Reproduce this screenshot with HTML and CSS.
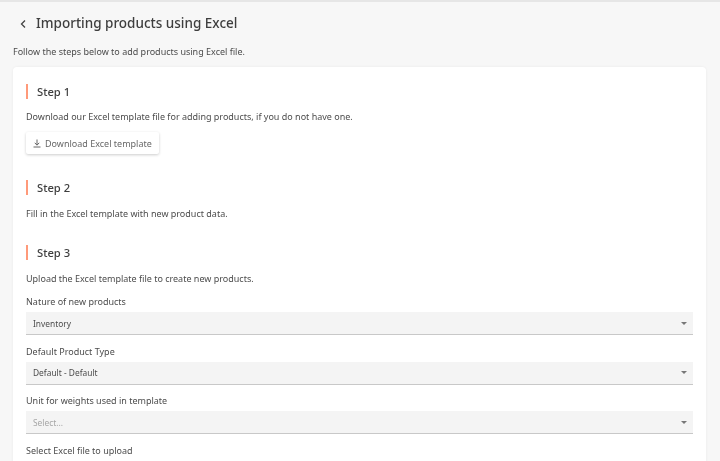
FILE: index.html
```html
<!DOCTYPE html>
<html lang="en">
<head>
<meta charset="utf-8">
<title>Importing products using Excel</title>
<link rel="stylesheet" href="styles.css">
</head>
<body>
<main class="page">
  <header class="page-head">
    <svg class="back" width="8" height="10" viewBox="0 0 8 10"><path d="M6 1.5 L2.5 5 L6 8.5" fill="none" stroke="#444" stroke-width="1.3"/></svg>
    <h1 class="title">Importing products using Excel</h1>
  </header>
  <p class="intro">Follow the steps below to add products using Excel file.</p>
  <section class="card">
    <div class="step">
      <h2 class="step-title">Step 1</h2>
      <p class="text">Download our Excel template file for adding products, if you do not have one.</p>
      <button class="btn" type="button">
        <svg width="8" height="9" viewBox="0 0 8 9"><path d="M4 0.5 V6 M1.8 3.8 L4 6.2 L6.2 3.8 M0.5 8 H7.5" fill="none" stroke="#666" stroke-width="1"/></svg>
        Download Excel template
      </button>
    </div>
    <div class="step step-2">
      <h2 class="step-title">Step 2</h2>
      <p class="text">Fill in the Excel template with new product data.</p>
    </div>
    <div class="step step-3">
      <h2 class="step-title">Step 3</h2>
      <p class="text">Upload the Excel template file to create new products.</p>
      <label class="label first">Nature of new products</label>
      <div class="select"><span>Inventory</span><i class="caret"></i></div>
      <label class="label">Default Product Type</label>
      <div class="select"><span>Default - Default</span><i class="caret"></i></div>
      <label class="label">Unit for weights used in template</label>
      <div class="select"><span class="placeholder">Select...</span><i class="caret"></i></div>
      <label class="label">Select Excel file to upload</label>
    </div>
  </section>
</main>
</body>
</html>
```
FILE: styles.css
```css
* { box-sizing: border-box; }
html, body { margin: 0; height: 100%; overflow: hidden; }
body {
  background: #f7f7f7;
  font-family: "Noto Sans", sans-serif;
  color: #4c4c4c;
  font-size: 9px;
}
.page { border-top: 2px solid #e6e6e6; padding: 0 14px 0 13px; filter: blur(.3px); }
.page-head { display: flex; align-items: center; height: 40px; padding: 2px 0 0 6px; }
.back { margin-right: 9px; margin-top: 2px; }
.title { margin: 0; font-size: 13.5px; font-weight: 500; color: #3e3e3e; line-height: 20px; }
.intro { margin: 3px 0 0; line-height: 13px; height: 22px; }
.card {
  background: #fff;
  border-radius: 4px;
  box-shadow: 0 0 3px rgba(0,0,0,.06);
  padding: 17px 13px 0;
  height: 400px;
}
.step-title {
  margin: 0;
  border-left: 2px solid #ff9a7a;
  padding-left: 9px;
  font-size: 11.2px;
  font-weight: 500;
  color: #3e3e3e;
  line-height: 15px;
}
.text { margin: 11px 0 0; line-height: 13px; }
.btn {
  display: flex; align-items: center; gap: 4px;
  margin-top: 9px; height: 22px; padding: 0 7px;
  background: #fff; border: 0; border-radius: 2px;
  box-shadow: 0 1px 3px rgba(0,0,0,.2);
  font: inherit; color: #686868;
}
.step-2 { margin-top: 26px; }
.step-2 .text { margin-top: 12px; }
.step-3 { margin-top: 25px; }
.step-3 .text { margin-top: 12px; }
.label { display: block; margin-top: 10px; line-height: 13px; }
.select {
  display: flex; align-items: center; justify-content: space-between;
  height: 23px; margin-top: 4px; padding: 0 6px 0 7px;
  background: #f4f4f4; border-bottom: 1.5px solid #c8c8c8;
  color: #4c4c4c; font-size: 8.4px;
}
.select + .label { margin-top: 9.5px; }
.placeholder { color: #a6a6a6; }
.caret { width: 0; height: 0; border: 3px solid transparent; border-top: 3px solid #777; border-bottom: 0; }
```
